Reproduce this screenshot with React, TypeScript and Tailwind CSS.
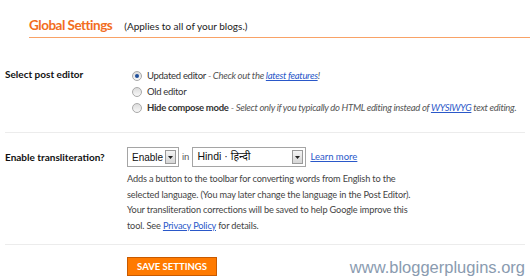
import React from "react";

function Radio({ checked }: { checked?: boolean }) {
  return (
    <span className="relative inline-flex h-[10px] w-[10px] shrink-0 items-center justify-center rounded-full border border-[#a9a9a9] bg-gradient-to-b from-[#dcdcdc] to-[#f8f8f8]">
      {checked && <span className="h-[4px] w-[4px] rounded-full bg-[#1f4f9a]" />}
    </span>
  );
}

function DropButton() {
  return (
    <span className="flex h-[14px] w-[11px] shrink-0 items-center justify-center border border-[#9a9a9a] bg-gradient-to-b from-[#f4f4f4] to-[#d6d6d6]">
      <svg width="5" height="3" viewBox="0 0 5 3">
        <path d="M0 0 H5 L2.5 3 Z" fill="#222" />
      </svg>
    </span>
  );
}

const link = "text-[#2a58c9] underline";

export default function App() {
  const body = { fontFamily: 'Lato, "Noto Sans", sans-serif' };
  const arial = { fontFamily: '"Liberation Sans", Arial, "Noto Sans", sans-serif' };
  return (
    <div className="relative h-[280px] w-[530px] overflow-hidden bg-white text-[#333]" style={body}>
      <div className="ml-[29px] flex items-baseline gap-[12px] border-b-[1.5px] border-[#f9a266] pt-[16px] pb-[2px] leading-[18px]">
        <span className="text-[13.5px] font-bold tracking-[-0.5px] text-[#f26d21]">Global Settings</span>
        <span className="text-[10px] text-[#222]">(Applies to all of your blogs.)</span>
      </div>

      <div className="mx-[5px] flex border-b border-[#ececec] pt-[30px] pb-[16px]">
        <div className="-mt-[2px] w-[126px] shrink-0 text-[10px] leading-[16px] font-bold text-[#111]">Select post editor</div>
        <div className="flex flex-col pl-[1px] text-[9.5px] leading-[16px] tracking-[-0.3px] text-[#333]">
          <div className="flex items-center gap-[5px]">
            <Radio checked />
            <span>
              Updated editor <i className="text-[#555]">- Check out the <a className={link}>latest features</a>!</i>
            </span>
          </div>
          <div className="flex items-center gap-[5px]">
            <Radio />
            <span>Old editor</span>
          </div>
          <div className="flex items-center gap-[5px]">
            <Radio />
            <span className="whitespace-nowrap">
              <b>Hide compose mode</b> <i className="text-[#555]">- Select only if you typically do HTML editing instead of <a className={link}>WYSIWYG</a> text editing.</i>
            </span>
          </div>
        </div>
      </div>

      <div className="mx-[5px] flex border-b border-[#ececec] pt-[14px] pb-[11px]">
        <div className="w-[122px] shrink-0 pt-[2px] text-[10px] leading-[16px] font-bold text-[#111]">Enable transliteration?</div>
        <div className="flex flex-col">
          <div className="flex items-center gap-[3px]" style={arial}>
            <div className="flex h-[20px] w-[52px] items-center justify-between border border-[#a5a5a5] bg-white pr-[2px] pl-[4px] text-[10px] text-[#111]">
              <span>Enable</span>
              <DropButton />
            </div>
            <span className="text-[9.5px] text-[#555]">in</span>
            <div className="flex h-[20px] w-[114px] items-center justify-between border border-[#a5a5a5] bg-white pr-[2px] pl-[4px] text-[10.5px] text-[#111]">
              <span>Hindi · हिन्दी</span>
              <DropButton />
            </div>
            <a className={`ml-[1px] text-[9.5px] ${link}`} style={body}>Learn more</a>
          </div>
          <p className="mt-[4px] text-[9.2px] leading-[15.5px] tracking-[-0.15px] whitespace-nowrap text-[#444]">
            Adds a button to the toolbar for converting words from English to the
            <br />
            selected language. (You may later change the language in the Post Editor).
            <br />
            Your transliteration corrections will be saved to help Google improve this
            <br />
            tool. See <a className={link}>Privacy Policy</a> for details.
          </p>
        </div>
      </div>

      <div className="pt-[12px] pl-[127px]">
        <button className="block h-[19px] w-[90px] border border-[#c85a00] bg-[#ff7a00] text-[9.5px] leading-[17px] font-bold text-white">SAVE SETTINGS</button>
      </div>

      <span className="absolute right-[5px] bottom-[3px] text-[16.5px] leading-[20px] text-[#8a9bb0]" style={arial}>
        www.bloggerplugins.org
      </span>
    </div>
  );
}
